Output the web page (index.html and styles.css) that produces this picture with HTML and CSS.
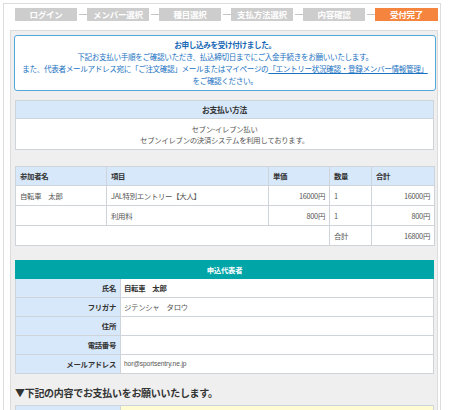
FILE: index.html
```html
<!DOCTYPE html>
<html lang="ja">
<head>
<meta charset="utf-8">
<link rel="stylesheet" href="styles.css">
</head>
<body>
<div class="frame">
  <div class="steps">
    <div class="step">ログイン</div><span class="dash"></span>
    <div class="step">メンバー選択</div><span class="dash"></span>
    <div class="step">種目選択</div><span class="dash"></span>
    <div class="step">支払方法選択</div><span class="dash"></span>
    <div class="step">内容確認</div><span class="dash"></span>
    <div class="step current">受付完了</div>
  </div>
  <div class="panel">
    <div class="notice">
      <p class="notice-title">お申し込みを受け付けました。</p>
      <p>下記お支払い手順をご確認いただき、払込締切日までにご入金手続きをお願いいたします。</p>
      <p>また、代表者メールアドレス宛に「ご注文確認」メールまたはマイページの<a class="link">「エントリー状況確認・登録メンバー情報管理」</a></p>
      <p>をご確認ください。</p>
    </div>

    <table class="tbl pay">
      <tr><th>お支払い方法</th></tr>
      <tr><td>セブン-イレブン払い<br>セブンイレブンの決済システムを利用しております。</td></tr>
    </table>

    <table class="tbl items">
      <colgroup>
        <col class="c1"><col class="c2"><col class="c3"><col class="c4"><col class="c5">
      </colgroup>
      <tr><th>参加者名</th><th>項目</th><th>単価</th><th>数量</th><th>合計</th></tr>
      <tr><td>自転車　太郎</td><td>JAL特別エントリー【大人】</td><td class="num">16000円</td><td>1</td><td class="num">16000円</td></tr>
      <tr><td></td><td>利用料</td><td class="num">800円</td><td>1</td><td class="num">800円</td></tr>
      <tr><td colspan="3"></td><td>合計</td><td class="num">16800円</td></tr>
    </table>

    <table class="tbl applicant">
      <colgroup><col class="lab"><col></colgroup>
      <tr><th colspan="2" class="teal">申込代表者</th></tr>
      <tr><th class="label">氏名</th><td class="strong">自転車　太郎</td></tr>
      <tr><th class="label">フリガナ</th><td>ジテンシャ　タロウ</td></tr>
      <tr><th class="label">住所</th><td></td></tr>
      <tr><th class="label">電話番号</th><td></td></tr>
      <tr><th class="label">メールアドレス</th><td class="mail">hor@sportsentry.ne.jp</td></tr>
    </table>

    <h2 class="section">▼下記の内容でお支払いをお願いいたします。</h2>

    <table class="tbl applicant next">
      <colgroup><col class="lab"><col></colgroup>
      <tr><th class="label"></th><td class="yellow"></td></tr>
    </table>
  </div>
</div>
</body>
</html>
```

FILE: styles.css
```css
* { box-sizing: border-box; }
html, body { margin: 0; padding: 0; background: #fff; }
body {
  font-family: "Noto Sans CJK JP", "Noto Sans", sans-serif;
  color: #444;
  width: 450px;
  height: 410px;
  overflow: hidden;
}
.frame {
  margin: 3px 0 0 3px;
  width: 438px;
  height: 420px;
  border: 1px solid #dcdcdc;
  border-bottom: none;
  background: #fff;
}
.steps {
  display: flex;
  align-items: center;
  padding: 4px 0 0 11px;
  height: 17px;
}
.step {
  width: 62px;
  height: 13px;
  background: #cdcdcd;
  color: #fff;
  font-size: 8.5px;
  font-weight: bold;
  line-height: 13px;
  text-align: center;
  white-space: nowrap;
  letter-spacing: -0.2px;
}
.step.current { background: #f5843f; width: 63px; }
.dash {
  display: block;
  width: 10px;
  height: 13px;
  position: relative;
}
.dash::after {
  content: "";
  position: absolute;
  left: 2px;
  right: 0;
  top: 6px;
  height: 1px;
  background: #c4c4c4;
}
.panel {
  margin: 9px 2px 0 6px;
  height: 400px;
  border: 1px solid #dcdcdc;
  border-bottom: none;
  background: #efefef;
  padding: 4px 1px 0 3px;
}
.notice {
  border: 1px solid #52a6da;
  border-radius: 3px;
  background: #fff;
  padding: 3px 0;
  text-align: center;
  color: #1a72c2;
  font-size: 7.6px;
  line-height: 12px;
  letter-spacing: -0.35px;
}
.notice p { margin: 0; white-space: nowrap; }
.notice-title { font-weight: bold; color: #1466b4; }
.link { text-decoration: underline; color: #1a72c2; }

.tbl {
  width: 419px;
  margin: 0 1px;
  border-collapse: collapse;
  background: #fff;
  font-size: 7.4px;
  letter-spacing: -0.3px;
  table-layout: fixed;
}
.tbl th, .tbl td {
  border: 1px solid #cfd4da;
  padding: 0 4px;
  white-space: nowrap;
  overflow: hidden;
  line-height: 10px;
}
.tbl th {
  background: #d7e8fa;
  color: #333;
  font-weight: bold;
  text-align: left;
}
.pay { margin-top: 9px; }
.pay th { text-align: center; height: 18px; font-size: 7.8px; }
.pay td { text-align: center; height: 31px; line-height: 11px; color: #555; }

.items { margin-top: 16px; }
.items col.c1 { width: 91px; }
.items col.c2 { width: 162px; }
.items col.c3 { width: 61px; }
.items col.c4 { width: 42px; }
.items col.c5 { width: 63px; }
.items th { height: 19px; }
.items td { height: 20px; color: #555; }
.items td.num { text-align: right; }

.applicant { margin-top: 14px; }
.applicant col.lab { width: 105px; }
.applicant th.teal {
  background: #00a5a8;
  color: #fff;
  text-align: center;
  height: 18px;
  border-color: #00a5a8;
}
.applicant th.label { text-align: right; height: 19px; padding-right: 4px; }
.applicant td { padding-left: 3px; color: #555; }
.applicant td.strong { font-weight: bold; color: #333; }
.applicant td.mail { font-family: "Liberation Sans", Arial, sans-serif; font-size: 6.6px; letter-spacing: -0.1px; }

.section {
  margin: 11px 0 0 1px;
  font-size: 10px;
  line-height: 16px;
  font-weight: bold;
  color: #333;
  letter-spacing: -0.3px;
}
.next { margin-top: 4px; }
.next td.yellow { background: #fffbd3; height: 19px; }
```
